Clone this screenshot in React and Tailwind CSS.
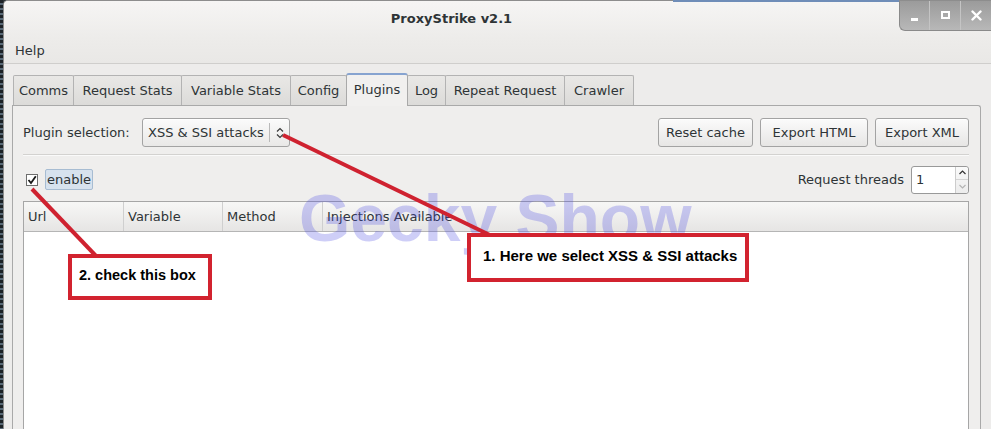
import React from 'react'

const ui = { fontFamily: '"DejaVu Sans", "Liberation Sans", sans-serif' }
const callout = { fontFamily: '"Liberation Sans", Arial, sans-serif' }

const tabs = [
  { label: 'Comms', w: 'w-[61px]' },
  { label: 'Request Stats', w: 'w-[109px]' },
  { label: 'Variable Stats', w: 'w-[110px]' },
  { label: 'Config', w: 'w-[57px]' },
  { label: 'Plugins', w: 'w-[62px]', active: true },
  { label: 'Log', w: 'w-[39px]' },
  { label: 'Repeat Request', w: 'w-[120px]' },
  { label: 'Crawler', w: 'w-[70px]' },
]

const columns = [
  { label: 'Url', w: 'w-[100px]' },
  { label: 'Variable', w: 'w-[99px]' },
  { label: 'Method', w: 'w-[100px]' },
  { label: 'Injections Available', w: 'flex-1' },
]

function Tab({ label, w, active }) {
  if (active) {
    return (
      <div
        className={`${w} h-[33px] -mb-px -ml-px z-10 flex items-center justify-center border border-[#a9a9a9] border-b-0 border-t-2 border-t-[#86a3d0] rounded-t-[3px] bg-[#f1f0ef] text-[13px] text-[#2e3436] pb-[2px]`}
      >
        {label}
      </div>
    )
  }
  return (
    <div
      className={`${w} h-[30px] flex items-center justify-center border border-[#b3b3b3] border-b-0 rounded-t-[2px] bg-gradient-to-b from-[#e9e8e6] to-[#dcdbd9] text-[13px] text-[#2e3436] -ml-px first:ml-0`}
    >
      {label}
    </div>
  )
}

function Button({ children, w }) {
  return (
    <div
      className={`${w} h-[29px] flex items-center justify-center rounded-[3px] border border-[#a3a3a3] bg-gradient-to-b from-[#fbfbfb] to-[#e7e6e5] text-[13px] text-[#2e3436] shadow-[inset_0_1px_0_#ffffff]`}
    >
      {children}
    </div>
  )
}

export default function App() {
  return (
    <div className="relative w-[991px] h-[429px] overflow-hidden bg-[#2b3236] flex" style={ui}>
      {/* desktop strip on the left */}
      <div className="w-[3px] h-full bg-[repeating-linear-gradient(to_bottom,#1d2327_0px,#1d2327_3px,#5a6a78_3px,#5a6a78_5px)]" />

      {/* window */}
      <div className="flex-1 flex flex-col bg-[#edeceb] border-t border-l border-[#8d8d8d] rounded-tl-[5px] overflow-hidden">
        {/* title bar */}
        <div className="h-[37px] flex bg-gradient-to-b from-[#f6f5f4] to-[#edecea]">
          <div className="flex-1 flex items-center justify-center pb-[1px] text-[13px] font-bold text-[#2e3436]">
            ProxyStrike v2.1
          </div>
          <div className="w-[92px] h-[31px] -mt-px flex rounded-bl-[6px] overflow-hidden bg-gradient-to-b from-[#9a9a9a] to-[#b8b8b8] border-l border-b border-[#8a8a8a]">
            <div className="w-[30px] flex items-center justify-center border-r border-[#c4c4c4]">
              <div className="w-[7px] h-[3px] bg-white mt-[8px]" />
            </div>
            <div className="w-[31px] flex items-center justify-center border-r border-[#c4c4c4]">
              <div className="w-[9px] h-[8px] border-2 border-white" />
            </div>
            <div className="flex-1 flex items-center justify-center">
              <svg width="11" height="11" viewBox="0 0 11 11">
                <path d="M1.5 1.5 L9.5 9.5 M9.5 1.5 L1.5 9.5" stroke="#ffffff" strokeWidth="2.4" strokeLinecap="round" />
              </svg>
            </div>
          </div>
        </div>

        {/* menu bar */}
        <div className="h-[26px] flex items-center pl-[11px] border-b border-[#cfcecc] bg-gradient-to-b from-[#edecea] to-[#e9e8e6] text-[13px] text-[#2e3436]">
          Help
        </div>

        {/* notebook */}
        <div className="flex-1 flex flex-col pl-[8px] pr-[10px] pt-[9px]">
          <div className="flex items-end pl-px">
            {tabs.map((t) => (
              <Tab key={t.label} {...t} />
            ))}
          </div>

          <div className="flex-1 flex flex-col border border-[#a9a9a9] border-b-0 rounded-tr-[3px] bg-[#efeeed] pl-[10px] pr-[11px] pt-[12px]">
            {/* plugin row */}
            <div className="flex items-center h-[29px]">
              <span className="text-[13px] text-[#2e3436] w-[119px]">Plugin selection:</span>
              <div className="w-[148px] h-[29px] flex items-center rounded-[3px] border border-[#a3a3a3] bg-gradient-to-b from-[#fbfbfb] to-[#e9e8e7] text-[13px] text-[#2e3436] shadow-[inset_0_1px_0_#ffffff]">
                <span className="pl-[5px] w-[126px]">XSS &amp; SSI attacks</span>
                <div className="h-[19px] border-l border-[#b9b9b9]" />
                <svg className="ml-[6px]" width="8" height="12" viewBox="0 0 8 12">
                  <path d="M1 4.5 L4 1.5 L7 4.5 M1 7.5 L4 10.5 L7 7.5" stroke="#3a3a3a" strokeWidth="1.2" fill="none" />
                </svg>
              </div>
              <div className="flex-1" />
              <div className="flex gap-[7px]">
                <Button w="w-[95px]">Reset cache</Button>
                <Button w="w-[108px]">Export HTML</Button>
                <Button w="w-[94px]">Export XML</Button>
              </div>
            </div>

            {/* separator */}
            <div className="mt-[7px] border-t border-[#d3d2d0] border-b border-b-[#fafafa]" />

            {/* enable row */}
            <div className="mt-[9px] h-[29px] flex items-center">
              <div className="ml-[3px] w-[12px] h-[12px] border border-[#6e6e6e] bg-white flex items-center justify-center">
                <svg width="10" height="10" viewBox="0 0 10 10">
                  <path d="M1.5 5 L4 8 L8.8 1.2" stroke="#1a1a1a" strokeWidth="1.8" fill="none" />
                </svg>
              </div>
              <div className="ml-[7px] h-[21px] px-px flex items-center rounded-[2px] border border-[#a7bcd2] bg-[#d7e2ee] text-[13px] text-[#2e3436]">
                enable
              </div>
              <div className="flex-1" />
              <span className="text-[13px] text-[#2e3436] mr-[7px]">Request threads</span>
              <div className="w-[58px] h-[28px] flex rounded-[3px] border border-[#999999] bg-white">
                <span className="flex-1 flex items-center pl-[4px] text-[13px] text-[#2e3436]">1</span>
                <div className="w-[13px] flex flex-col border-l border-[#cccccc] bg-gradient-to-b from-[#fafafa] to-[#ececec] rounded-r-[3px]">
                  <div className="flex-1 flex items-center justify-center border-b border-[#d4d4d4]">
                    <svg width="7" height="5" viewBox="0 0 7 5">
                      <path d="M0.5 4 L3.5 1 L6.5 4" stroke="#333333" strokeWidth="1.2" fill="none" />
                    </svg>
                  </div>
                  <div className="flex-1 flex items-center justify-center">
                    <svg width="7" height="5" viewBox="0 0 7 5">
                      <path d="M0.5 1 L3.5 4 L6.5 1" stroke="#b4b4b4" strokeWidth="1.2" fill="none" />
                    </svg>
                  </div>
                </div>
              </div>
            </div>

            {/* tree view */}
            <div className="mt-[7px] flex-1 flex flex-col border border-[#a6a6a6] border-b-0 bg-white">
              <div className="h-[30px] flex border-b border-[#b5b5b5] bg-gradient-to-b from-[#f7f7f6] to-[#e6e5e4]">
                {columns.map((c, i) => (
                  <div
                    key={c.label}
                    className={`${c.w} flex items-center pl-[4px] text-[13px] text-[#2e3436] ${i < columns.length - 1 ? 'border-r border-[#cfcfcf]' : ''}`}
                  >
                    {c.label}
                  </div>
                ))}
              </div>
              <div className="flex-1" />
            </div>
          </div>
        </div>
      </div>

      {/* window behind, peeking at the top */}
      <div className="absolute left-[673px] top-0 w-[226px] h-[2px] bg-[#6f8db8]" />

      {/* watermark */}
      <div
        className="absolute left-[299px] top-[185px] text-[66px] leading-none font-bold text-[rgba(80,80,225,0.28)] whitespace-nowrap pointer-events-none"
        style={callout}
      >
        Gecky Show
      </div>

      {/* annotation arrows */}
      <svg className="absolute left-0 top-0 pointer-events-none" width="991" height="429">
        <line x1="283" y1="135" x2="496" y2="238" stroke="#cf2230" strokeWidth="4" />
        <line x1="32" y1="189" x2="96" y2="256" stroke="#cf2230" strokeWidth="4" />
      </svg>

      {/* annotation boxes */}
      <div
        className="absolute left-[467px] top-[233px] w-[282px] h-[49px] border-[4px] border-[#d2232f] bg-white flex items-center pl-[12px] pb-[3px] text-[15px] font-bold text-black"
        style={callout}
      >
        1. Here we select XSS &amp; SSI attacks
      </div>
      <div
        className="absolute left-[68px] top-[254px] w-[144px] h-[46px] border-[4px] border-[#d2232f] bg-white pl-[7px] pt-[7px] text-[14.5px] font-bold text-black"
        style={callout}
      >
        2. check this box
      </div>
    </div>
  )
}
